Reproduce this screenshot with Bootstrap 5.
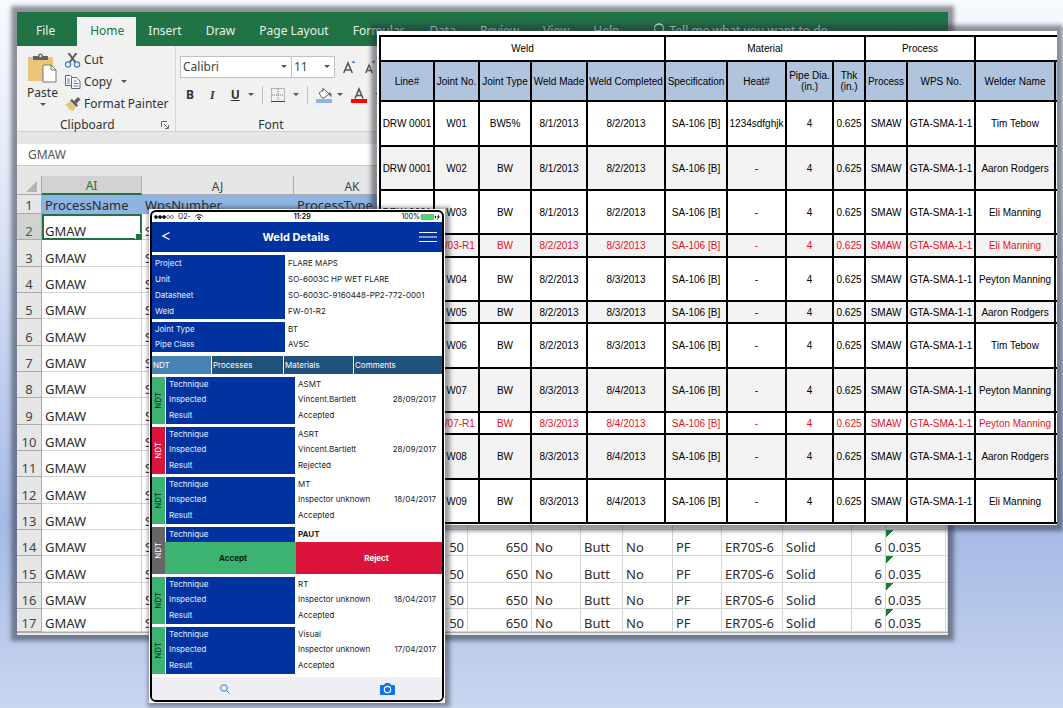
<!DOCTYPE html>
<html lang="en">
<head>
<meta charset="utf-8">
<meta name="viewport" content="width=device-width, initial-scale=1">
<title>Weld Details</title>
<link href="https://cdn.jsdelivr.net/npm/bootstrap@5.3.0/dist/css/bootstrap.min.css" rel="stylesheet">
<style>
  body { background: #f5f7fd; }
  .desk { position: relative; min-height: 100vh; overflow: hidden; background: linear-gradient(#f7f9fe 0%, #dfe7f7 28%, #a5b9e6 74%, #b6c6e9 86%, #c8d6ef 100%); }
  .win { position: absolute; box-shadow: 0 0 4px 6px rgba(40,45,58,.5); }

  /* spreadsheet */
  .sheet { left: 17px; right: 115px; top: 12px; background: #e6e6e6; font-family: "Noto Sans", sans-serif; font-size: 12px; line-height: 16px; color: #333; overflow: hidden; z-index: 1; }
  .ribbon-tabs { height: 34px; background: #217346; padding: 5px 0 0 5px; }
  .ribbon-tabs .nav-link { color: #e6f2ea; padding: 6px 12px 0; height: 29px; border-radius: 0; white-space: nowrap; }
  .ribbon-tabs .nav-link.active { background: #f1f1f1; color: #217346; padding-left: 13px; }
  .ribbon-tabs .file { padding-left: 14px; padding-right: 22px; }
  .ribbon { height: 86px; background: #f1f1f1; border-bottom: 1px solid #d2d2d2; }
  .ribbon button { border: 0; background: none; padding: 0; color: #333; display: flex; align-items: center; }
  .clip { width: 159px; padding: 4px 2px 0 11px; border-right: 1px solid #d6d6d6; }
  .grp { height: 67px; }
  .clip .stack { gap: 6px; padding: 2px 0 0 8px; }
  .clip .stack button { gap: 3px; white-space: nowrap; }
  .paste { flex-direction: column; width: 29px; padding-top: 3px !important; gap: 2px; }
  .fontgrp { flex: 1; padding: 4px 0 0 4px; }
  .fontgrp .picks { padding-top: 6px; }
  .sheet select { appearance: none; height: 22px; border: 1px solid #c0c0c0; border-radius: 0; background: #fff url("data:image/svg+xml,%3Csvg xmlns='http://www.w3.org/2000/svg' width='6' height='4'%3E%3Cpath d='M0 0h6L3 3z' fill='%23555'/%3E%3C/svg%3E") no-repeat right 4px center; padding: 0 2px; color: #444; font-size: 12px; }
  .fname { width: 112px; } .fsize { width: 44px; margin-left: -1px; }
  .biu { padding: 8px 0 0 2px; }
  .biu button { height: 18px; }
  .serif-i { font-family: "Liberation Serif", serif; font-weight: 700; }
  .formula { width: 100%; height: 22px; display: block; margin-top: 12px; border: 0; border-bottom: 1px solid #ccc; background: #fff; padding: 0 11px; color: #555; font-size: 12px; }
  .gridarea { height: 466px; overflow: hidden; padding-top: 10px; }
  .cells { table-layout: fixed; width: 100%; border-collapse: separate; border-spacing: 0; background: #fff; font-size: 13px; line-height: 15px; color: #2b2b2b; }
  .cells td, .cells th { padding: 0 3px; border-right: 1px solid #d4d4d4; border-bottom: 1px solid #d4d4d4; vertical-align: bottom; white-space: nowrap; font-weight: 400; overflow: hidden; }
  .cells thead th { height: 19px; background: #e6e6e6; text-align: center; color: #444; border-color: #ababab; font-size: 12px; }
  .cells tbody th { background: #e6e6e6; text-align: center; color: #444; padding: 0; border-color: #ababab; }
  .cells tbody tr { height: 26px; } .cells tbody tr:nth-child(3n) { height: 27px; }
  .cells tbody tr.names { height: 19px; } .cells tbody tr:last-child { height: 23px; }
  .cells .names td { background: #8db4e2; border-color: #8db4e2; }
  .cells thead th.on { background: #d2d2d2; color: #217346; border-bottom: 2px solid #217346; }
  .cells tbody th.on { background: #d2d2d2; color: #217346; }
  .cells td.cur { outline: 2px solid #217346; outline-offset: -2px; position: relative; }
  .cells td.cur::after { content: ""; position: absolute; right: 0; bottom: 0; width: 6px; height: 6px; background: #217346; border: solid #fff; border-width: 1px 0 0 1px; }
  .cells td.flag { background: linear-gradient(135deg, #1e7b34 5px, transparent 5px) no-repeat; padding-left: 2px; }
  .sheet-foot { height: 3px; background: #e9e9e9; border-top: 1px solid #ababab; }

  /* weld log */
  .log { left: 377px; right: 6px; top: 31px; background: #fff; padding: 4px 0 0 2px; z-index: 2; }
  .weldlog { table-layout: fixed; width: 100%; border-collapse: collapse; font: 10px/11px "Liberation Sans", Arial, sans-serif; color: #000; text-align: center; }
  .weldlog td, .weldlog th { border: 2px solid #000; padding: 0; font-weight: 400; white-space: nowrap; vertical-align: middle; }
  .weldlog tr > :last-child { border-right: 0; }
  .weldlog .groups th { height: 25px; }
  .weldlog .heads th { background: #b0c4de; height: 40px; }
  .weldlog .alt td { background: #f3f3f3; }
  .weldlog .repair td { color: #e8101c; }
  .weldlog .h22 td { height: 22px; } .weldlog .h23 td { height: 23px; } .weldlog .h44 td { height: 44px; } .weldlog .h45 td { height: 45px; }
  .log-tail { height: 1px; }

  /* phone */
  .phone { left: 149px; top: 209px; width: 296px; background: #fff; padding: 1px; z-index: 3; box-shadow: 2px 1px 4px 3px rgba(40,45,58,.45); }
  .screen { border: 2px solid #000; border-radius: 6px; overflow: hidden; background: #fff; font: 8px/15px Inter, sans-serif; color: #1c1c1c; }
  .status { height: 10px; line-height: 10px; font-size: 7px; padding: 0 2px; color: #000; }
  .titlebar { height: 30px; background: #0033a0; color: #fff; padding: 0 5px 0 8px; }
  .titlebar h1 { font-size: 11px; font-weight: 700; margin: 0; line-height: 30px; }
  .screen button { border: 0; background: none; padding: 0; color: inherit; font: inherit; display: flex; align-items: center; justify-content: center; }
  .facts { display: grid; grid-template-columns: 133px 1fr; margin: 0 0 4px; }
  .facts dt, .check dt { background: #0033a0; color: #e8eeff; font-weight: 400; padding-left: 3px; }
  .facts dd, .check dd { margin: 0; padding-left: 3px; }
  .tall { grid-auto-rows: 16px; line-height: 16px; padding-top: 3px; margin-bottom: 3px; }
  .short-rows { grid-auto-rows: 15px; line-height: 15px; }
  .phonetabs { display: grid; grid-template-columns: 59px 71px 69px 1fr; gap: 1px; height: 18px; margin-bottom: 3px; }
  .screen .phonetabs button { background: #20517a; color: #fff; justify-content: flex-start; padding-left: 1px; }
  .screen .phonetabs button.on { background: #4682b4; }
  .check { display: flex; height: 47px; margin-bottom: 3px; }
  .side { width: 13px; margin-right: 1px; display: flex; align-items: center; justify-content: center; background: #3cb371; color: #123; }
  .side span { writing-mode: vertical-rl; transform: rotate(180deg); line-height: 13px; }
  .bad .side { background: #dc143c; color: #fff; }
  .open .side { background: #666; color: #fff; }
  .check dl { flex: 1; margin: 0; display: grid; grid-template-columns: 129px 1fr; grid-template-rows: 15px 16px 16px; line-height: 15px; }
  .check dd { display: flex; justify-content: space-between; padding-right: 6px; }
  .open .acts { display: grid; grid-template-columns: 131px 1fr; height: 32px; margin-left: -1px; }
  .check.open dl { height: 15px; }
  .screen .acts button { background: #3cb371; color: #06230f; font-weight: 700; padding-left: 5px; }
  .screen .acts button + button { background: #dc143c; color: #fff; padding-left: 15px; }
  .phonebar { height: 23px; background: #eeeef4; margin-top: 1px; }
  .screen .phonebar .cam { padding-left: 35px; }
</style>
</head>
<body>
<main class="desk">

<section class="win sheet" aria-label="Spreadsheet">
  <nav class="nav ribbon-tabs flex-nowrap">
    <a class="nav-link file" href="#">File</a>
    <a class="nav-link active" href="#">Home</a>
    <a class="nav-link" href="#">Insert</a>
    <a class="nav-link" href="#">Draw</a>
    <a class="nav-link" href="#">Page Layout</a>
    <a class="nav-link" href="#">Formulas</a>
    <a class="nav-link" href="#">Data</a>
    <a class="nav-link" href="#">Review</a>
    <a class="nav-link" href="#">View</a>
    <a class="nav-link" href="#">Help</a>
    <a class="nav-link d-flex gap-1 ms-2" href="#"><svg width="14" height="16" viewBox="0 0 14 16" fill="none" stroke="#e6f2ea" stroke-width="1.3"><path d="M5 11C5 9 2.500 8 2.500 5.500a4.500 4.500 0 0 1 9 0C11.500 8 9 9 9 11zM5 13h4"/></svg>Tell me what you want to do</a>
  </nav>

  <div class="ribbon d-flex">
    <div class="clip">
      <div class="grp d-flex align-items-start">
        <button class="paste" type="button">
          <svg width="29" height="30" viewBox="0 0 29 30"><path d="M0 4h25v24H0z" fill="#ecc57c"/><path d="M5 3h5a2.500 2.500 0 0 1 5 0h5v4H5z" fill="#5f6368"/><circle cx="12.500" cy="3" r="1.200" fill="#f1f1f1"/><path d="M15 12h8l5 5v12H15z" fill="#fff" stroke="#777"/><path d="M23 12v5h5" fill="none" stroke="#777"/></svg>
          <span>Paste</span>
          <svg width="6" height="4"><path d="M0 0h6L3 3z" fill="#555"/></svg>
        </button>
        <div class="stack d-flex flex-column">
          <button type="button"><svg width="16" height="15" viewBox="0 0 16 15" fill="none"><path d="M3.500 0l7 9.500M11.500 0l-7 9.500" stroke="#5a5a5a" stroke-width="2"/><circle cx="3" cy="11.500" r="2.600" stroke="#4a7ebb" stroke-width="1.300"/><circle cx="12" cy="11.500" r="2.600" stroke="#4a7ebb" stroke-width="1.300"/></svg>Cut</button>
          <button type="button"><svg width="16" height="14" viewBox="0 0 16 14" fill="#fff" stroke="#5f6b78"><path d="M.5.500h5l2 2v8h-7z"/><path d="M6.500 2.500h5l3.500 3.500v7.500H6.500z"/><path d="M2 4h3M2 6h3M2 8h3M8.500 6h3M8.500 8.500h5M8.500 11h5" stroke="#4a7ebb"/></svg>Copy<svg class="ms-1" width="8" height="4"><path d="M2 0h6L5 3z" fill="#555"/></svg></button>
          <button type="button"><svg width="16" height="14" viewBox="0 0 16 14"><path d="M0 8l5-4 6 6-3 4-3-1 1-1-3 .500 1-1.500z" fill="#ecc57c"/><path d="M5 3.500l2-1.500 2 2L13 0l2.500 2.500-4 4 1.500 2-1.500 1.500z" fill="#5f5f5f"/></svg>Format Painter</button>
        </div>
      </div>
      <div class="d-flex justify-content-between align-items-center"><span class="ps-4 ms-2">Clipboard</span>
        <svg class="me-1" width="8" height="8" viewBox="0 0 8 8" fill="none" stroke="#666"><path d="M.5 6V.500H6M3 3l4 4M7.500 4v3.500H4"/></svg></div>
    </div>
    <div class="fontgrp">
      <div class="grp">
        <div class="picks d-flex align-items-center">
          <select class="fname" aria-label="Font"><option>Calibri</option></select>
          <select class="fsize" aria-label="Font size"><option>11</option></select>
          <button type="button" class="ms-2" aria-label="Grow font"><svg width="13" height="14" viewBox="0 0 13 14" fill="none" stroke="#555" stroke-width="1.500"><path d="M.7 13L5 3l4.300 10M2.200 10h5.600"/><path d="M8.500 3l2-2.500 2 2.500z" fill="#4a7ebb" stroke="none"/></svg></button>
          <button type="button" class="ms-2" aria-label="Shrink font"><svg width="13" height="14" viewBox="0 0 13 14" fill="none" stroke="#555" stroke-width="1.400"><path d="M1.700 13L5 5l3.300 8M3 10.500h4"/><path d="M7.500 1h4l-2 2.500z" fill="#4a7ebb" stroke="none"/></svg></button>
        </div>
        <div class="d-flex align-items-center biu">
          <button type="button" class="px-1 fw-bold">B</button>
          <button type="button" class="ms-2 px-1" aria-label="Italic"><i class="serif-i">I</i></button>
          <button type="button" class="ms-2 px-1 fw-bold text-decoration-underline">U</button>
          <svg class="ms-1" width="6" height="4"><path d="M0 0h6L3 3z" fill="#555"/></svg>
          <span class="vr mx-2"></span>
          <button type="button" aria-label="Borders"><svg width="14" height="14" viewBox="0 0 14 14" fill="none" stroke="#777"><path d="M.5.500h13v13M.5.500v13M7 1v12M1 7h12" stroke-dasharray="1 1"/><path d="M0 13.500h14" stroke="#444"/></svg></button>
          <svg class="ms-2" width="6" height="4"><path d="M0 0h6L3 3z" fill="#555"/></svg>
          <span class="vr mx-2"></span>
          <button type="button" aria-label="Fill colour"><svg width="17" height="16" viewBox="0 0 17 16"><path d="M0 12h16v4H0z" fill="#8db4e2"/><path d="M3 6l5-4 5 5-5 4H6z" fill="#fff" stroke="#666"/><path d="M7 5V1" stroke="#666"/><path d="M13 5c3 1 3 4 2 5-2-1-2-3-2-5z" fill="#3f6fae"/></svg></button>
          <svg class="ms-1" width="6" height="4"><path d="M0 0h6L3 3z" fill="#555"/></svg>
          <button type="button" class="ms-2" aria-label="Font colour"><svg width="16" height="16" viewBox="0 0 16 16"><path d="M0 12h16v4H0z" fill="#f00"/><path d="M4 11.500L8 2l4 9.500M5.500 8.500h5" fill="none" stroke="#555" stroke-width="1.600"/></svg></button>
          <svg class="ms-2" width="6" height="4"><path d="M0 0h6L3 3z" fill="#555"/></svg>
        </div>
      </div>
      <div class="d-flex align-items-center"><span class="ps-5 ms-4">&nbsp; Font</span></div>
    </div>
  </div>
  <input class="formula" aria-label="Formula bar" value="GMAW">
  <div class="gridarea">
    <table class="cells">
      <colgroup><col style="width:25px"><col style="width:100px"><col style="width:152px"><col style="width:117px"><col style="width:57px"><col style="width:64px"><col style="width:49px"><col style="width:42px"><col style="width:50px"><col style="width:49px"><col style="width:61px"><col style="width:69px"><col style="width:34px"><col style="width:60px"><col></colgroup>
      <thead><tr><th><svg class="float-end" width="12" height="13"><path d="M11 0v11H0z" fill="#b4b4b4"/></svg></th><th class="on">AI</th><th>AJ</th><th>AK</th><th></th><th></th><th></th><th></th><th></th><th></th><th></th><th></th><th></th><th></th><th></th></tr></thead>
      <tbody id="cells"></tbody>
    </table>
  </div>
  <div class="sheet-foot"></div>
</section>

<section class="win log" aria-label="Weld log">
  <table class="weldlog">
    <colgroup><col style="width:54px"><col style="width:45px"><col style="width:52px"><col style="width:56px"><col style="width:78px"><col style="width:62px"><col style="width:59px"><col style="width:47px"><col style="width:32px"><col style="width:42px"><col style="width:68px"><col style="width:80px"><col></colgroup>
    <thead>
      <tr class="groups"><th colspan="5">Weld</th><th colspan="4">Material</th><th colspan="2">Process</th><th colspan="2"></th></tr>
      <tr class="heads"><th>Line#</th><th>Joint No.</th><th>Joint Type</th><th>Weld Made</th><th>Weld Completed</th><th>Specification</th><th>Heat#</th><th>Pipe Dia.<br>(in.)</th><th>Thk<br>(in.)</th><th>Process</th><th>WPS No.</th><th>Welder Name</th><th></th></tr>
    </thead>
    <tbody id="welds"></tbody>
  </table>
  <div class="log-tail"></div>
</section>

<section class="win phone" aria-label="Weld Details">
  <div class="screen">
    <div class="status d-flex justify-content-between align-items-center">
      <span class="d-flex align-items-center gap-1"><svg width="20" height="4" viewBox="0 0 20 4" stroke="#000" stroke-width=".5"><circle cx="2" cy="2" r="1.600"/><circle cx="6" cy="2" r="1.600"/><circle cx="10" cy="2" r="1.600"/><circle cx="14" cy="2" r="1.500" fill="none"/><circle cx="18" cy="2" r="1.500" fill="none"/></svg>O2-
        <svg width="8" height="6" viewBox="0 0 8 6" fill="none" stroke="#000"><path d="M.5 2.200c2-2 5-2 7 0M2 3.800c1.200-1.100 2.800-1.100 4 0"/><circle cx="4" cy="5.200" r=".5" fill="#000"/></svg></span>
      <span class="fw-semibold">11:29</span>
      <span class="d-flex align-items-center">100%<svg width="20" height="6" viewBox="0 0 20 6"><rect x="1" y=".5" width="13" height="5" rx="1" fill="#4cd964" stroke="#8a8"/><path d="M15 2h1v2h-1z"/><path d="M19 0l-2 3h1l-1 3 3-3.500h-1.500z"/></svg></span>
    </div>
    <header class="titlebar d-flex justify-content-between align-items-center">
      <button type="button" aria-label="Back"><svg width="13" height="12" viewBox="0 0 13 12" fill="none" stroke="#fff" stroke-width="1.400"><path d="M9.500 1.500L3 5l6.500 3.500"/></svg></button>
      <h1>Weld Details</h1>
      <button type="button" aria-label="Menu"><svg width="18" height="12" stroke="#fff" stroke-width="1.200"><path d="M0 1.500h18M0 6h18M0 10.500h18"/></svg></button>
    </header>
    <dl class="facts tall"><dt>Project</dt><dd>FLARE MAPS</dd><dt>Unit</dt><dd>SO-6003C HP WET FLARE</dd><dt>Datasheet</dt><dd>SO-6003C-9160448-PP2-772-0001</dd><dt>Weld</dt><dd>FW-01-R2</dd></dl>
    <dl class="facts short-rows"><dt>Joint Type</dt><dd>BT</dd><dt>Pipe Class</dt><dd>AV5C</dd></dl>
    <div class="phonetabs"><button class="on" type="button">NDT</button><button type="button">Processes</button><button type="button">Materials</button><button type="button">Comments</button></div>
    <div class="check"><div class="side"><span>NDT</span></div><dl><dt>Technique</dt><dd>ASMT</dd><dt>Inspected</dt><dd>Vincent.Bartlett<span>28/09/2017</span></dd><dt>Result</dt><dd>Accepted</dd></dl></div>
    <div class="check bad"><div class="side"><span>NDT</span></div><dl><dt>Technique</dt><dd>ASRT</dd><dt>Inspected</dt><dd>Vincent.Bartlett<span>28/09/2017</span></dd><dt>Result</dt><dd>Rejected</dd></dl></div>
    <div class="check"><div class="side"><span>NDT</span></div><dl><dt>Technique</dt><dd>MT</dd><dt>Inspected</dt><dd>Inspector unknown<span>18/04/2017</span></dd><dt>Result</dt><dd>Accepted</dd></dl></div>
    <div class="check open"><div class="side"><span>NDT</span></div><div class="flex-fill"><dl><dt>Technique</dt><dd class="fw-bold">PAUT</dd></dl><div class="acts"><button type="button">Accept</button><button type="button">Reject</button></div></div></div>
    <div class="check"><div class="side"><span>NDT</span></div><dl><dt>Technique</dt><dd>RT</dd><dt>Inspected</dt><dd>Inspector unknown<span>18/04/2017</span></dd><dt>Result</dt><dd>Accepted</dd></dl></div>
    <div class="check"><div class="side"><span>NDT</span></div><dl><dt>Technique</dt><dd>Visual</dd><dt>Inspected</dt><dd>Inspector unknown<span>17/04/2017</span></dd><dt>Result</dt><dd>Accepted</dd></dl></div>
    <div class="phonebar d-flex">
      <button class="w-50" type="button" aria-label="Search"><svg width="10" height="10" viewBox="0 0 10 10" fill="none" stroke="#1a73d8" stroke-width=".9"><circle cx="4" cy="4" r="3.300"/><path d="M6.500 6.500L9.500 9.500"/></svg></button>
      <button class="w-50 cam" type="button" aria-label="Camera"><svg width="15" height="12" viewBox="0 0 15 12"><path d="M1 2h3l1.500-2h4L11 2h3a1 1 0 0 1 1 1v8a1 1 0 0 1-1 1H1a1 1 0 0 1-1-1V3a1 1 0 0 1 1-1z" fill="#0b74f0"/><circle cx="7.500" cy="6.500" r="3.200" fill="none" stroke="#fff" stroke-width="1.200"/></svg></button>
    </div>
  </div>
</section>
</main>
<script>
  // Rows 2-13 of the right-hand columns lie under the weld log, so they stay empty.
  let rows = '<tr class="names"><th>1</th><td>ProcessName</td><td>WpsNumber</td><td>ProcessType</td>' + '<td></td>'.repeat(11) + '</tr>';
  for (let r = 2; r <= 17; r++) {
    const right = r < 14 ? '<td></td>'.repeat(11) :
      '<td class="text-end">50</td><td class="text-end">650</td><td>No</td><td>Butt</td><td>No</td><td>PF</td><td>ER70S-6</td><td>Solid</td><td class="text-end">6</td><td class="flag">0.035</td><td></td>';
    rows += `<tr><th class="${r === 2 ? 'on' : ''}">${r}</th><td class="${r === 2 ? 'cur' : ''}">GMAW</td><td>S</td><td></td>${right}</tr>`;
  }
  document.getElementById('cells').innerHTML = rows;

  const welds = [
    ['W01', 'BW5%', '8/1/2013', '8/2/2013', 'Tim Tebow', 'h45'],
    ['W02', 'BW', '8/1/2013', '8/2/2013', 'Aaron Rodgers', 'h44 alt'],
    ['W03', 'BW', '8/1/2013', '8/2/2013', 'Eli Manning', 'h44'],
    ['W03-R1', 'BW', '8/2/2013', '8/3/2013', 'Eli Manning', 'h23 alt repair'],
    ['W04', 'BW', '8/2/2013', '8/3/2013', 'Peyton Manning', 'h44'],
    ['W05', 'BW', '8/2/2013', '8/3/2013', 'Aaron Rodgers', 'h22 alt'],
    ['W06', 'BW', '8/2/2013', '8/3/2013', 'Tim Tebow', 'h45'],
    ['W07', 'BW', '8/3/2013', '8/4/2013', 'Peyton Manning', 'h44 alt'],
    ['W07-R1', 'BW', '8/3/2013', '8/4/2013', 'Peyton Manning', 'h22 repair'],
    ['W08', 'BW', '8/3/2013', '8/4/2013', 'Aaron Rodgers', 'h45 alt'],
    ['W09', 'BW', '8/3/2013', '8/4/2013', 'Eli Manning', 'h44']
  ];
  document.getElementById('welds').innerHTML = welds.map(([j, t, made, done, who, cls], i) =>
    `<tr class="${cls}"><td>${i < 3 ? 'DRW 0001' : ''}</td><td>${j}</td><td>${t}</td><td>${made}</td><td>${done}</td><td>SA-106 [B]</td><td>${i ? '-' : '1234sdfghjk'}</td><td>4</td><td>0.625</td><td>SMAW</td><td>GTA-SMA-1-1</td><td>${who}</td><td></td></tr>`).join('');
</script>
<script src="https://cdn.jsdelivr.net/npm/bootstrap@5.3.0/dist/js/bootstrap.bundle.min.js"></script>
</body>
</html>
